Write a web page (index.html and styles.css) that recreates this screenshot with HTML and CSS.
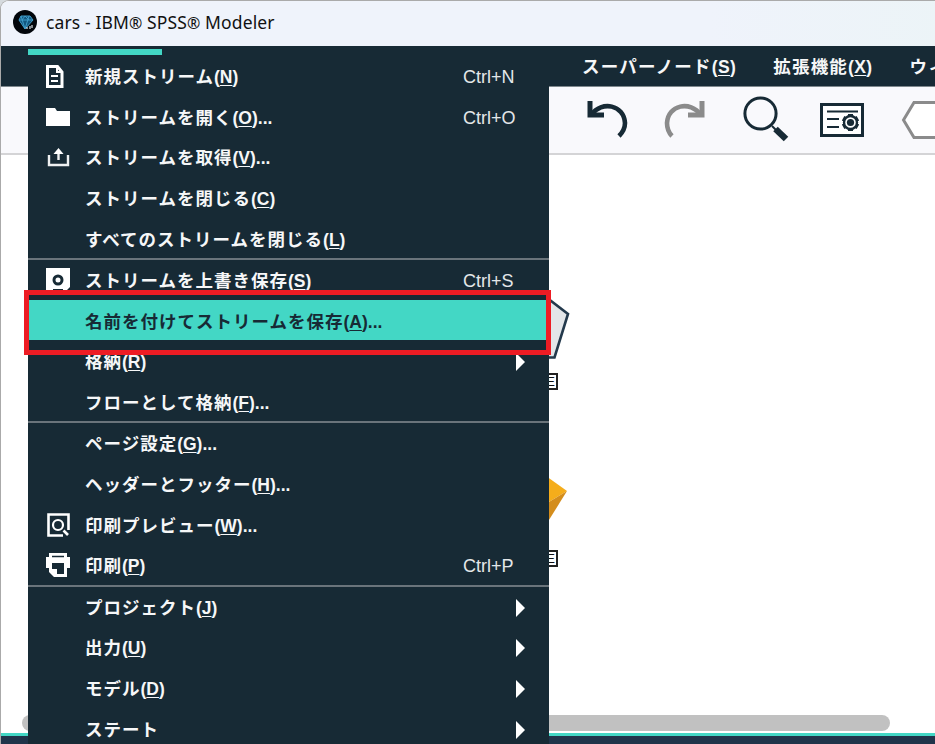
FILE: index.html
```
<!DOCTYPE html>
<html lang="ja">
<head>
    <meta charset="UTF-8">
    <meta name="viewport" content="width=device-width, initial-scale=1.0">
    <title>cars - IBM® SPSS® Modeler</title>
    <link rel="stylesheet" href="styles.css">
</head>
<body>
    <div class="window">
        <header class="titlebar">
            <svg class="app-icon" width="24" height="24" viewBox="0 0 24 24">
                <circle cx="12" cy="12" r="12" fill="#02060b"/>
                <path d="M8 6h9l3 4-8 9-6-9z" fill="#12577f"/>
                <path d="M8 6l-2 4 6 9 8-9-3-4H8l4 13 4-13M6 10h14M9 10l3-4 4 4" fill="none" stroke="#3f9cc9" stroke-width="1"/>
                <path d="M14 19v-2M17 19v-3M19 18v-3" stroke="#dce5ea" stroke-width="1.2"/>
            </svg>
            <span class="title">cars - IBM<span class="reg">®</span> SPSS<span class="reg">®</span> Modeler</span>
        </header>

        <nav class="menubar">
            <span class="menubar-item">スーパーノード<span class="key">(<u>S</u>)</span></span>
            <span class="menubar-item">拡張機能<span class="key">(<u>X</u>)</span></span>
            <span class="menubar-item">ウィ</span>
        </nav>

        <div class="toolbar">
            <svg class="tool undo" width="42" height="40" viewBox="0 0 42 40">
                <path d="M4 15C15 0 37 5 38 23c0 6-3 10-6 13" fill="none" stroke="#172a35" stroke-width="4.6"/>
                <path d="M3 1v14h14" fill="none" stroke="#172a35" stroke-width="5"/>
            </svg>
            <svg class="tool redo" width="42" height="40" viewBox="0 0 42 40">
                <path d="M38 15C27 0 5 5 4 23c0 6 2 10 5 13" fill="none" stroke="#8b8b8b" stroke-width="4.6"/>
                <path d="M39 1v14H25" fill="none" stroke="#8b8b8b" stroke-width="5"/>
            </svg>
            <svg class="tool search" width="46" height="46" viewBox="0 0 46 46">
                <circle cx="17.5" cy="17.5" r="15.6" fill="none" stroke="#172a35" stroke-width="3"/>
                <path d="M29 30l4 4" stroke="#172a35" stroke-width="2"/>
                <path d="M32.5 33L43 43" stroke="#172a35" stroke-width="6.5"/>
            </svg>
            <svg class="tool props" width="44" height="34" viewBox="0 0 44 34">
                <rect x="1.5" y="1.5" width="41" height="31" fill="#fff" stroke="#172a35" stroke-width="3"/>
                <path d="M7 8.500h31M7 16h12M7 24h12" stroke="#172a35" stroke-width="1.8"/>
                <path d="M30.500 11v17M23.100 15.250l14.800 8.500M37.900 15.250l-14.800 8.500" stroke="#172a35" stroke-width="5"/>
                <circle cx="30.5" cy="19.5" r="6.5" fill="#fff" stroke="#172a35" stroke-width="2.4"/>
                <circle cx="30.5" cy="19.5" r="3.6" fill="#172a35"/>
            </svg>
            <svg class="tool node" width="50" height="40" viewBox="0 0 50 40">
                <path d="M2.5 20L13 2.5h24L47 20 37 37.5H13z" fill="#fff" stroke="#8b8b8b" stroke-width="3"/>
            </svg>
        </div>

        <main class="canvas">
            <svg class="stream-node pentagon" width="60" height="64" viewBox="0 0 60 64">
                <path d="M31 -3L57 17 43.500 60.500H17L4 17z" fill="#e3e6e9" stroke="#23394c" stroke-width="2.6"/>
            </svg>
            <svg class="stream-node gem" width="60" height="60" viewBox="0 0 60 60">
                <path d="M30 0L58 20 30 37 2 20z" fill="#f5ad1b"/>
                <path d="M58 20L30 37v28z" fill="#d48d1c"/>
            </svg>
            <span class="node-label first">E</span>
            <span class="node-label second">E</span>
            <div class="scrollbar"></div>
        </main>
        <footer class="statusbar"></footer>
    </div>

    <div class="menu">
        <div class="menu-tab"></div>
        <div class="menu-item">
            <svg class="icon" width="26" height="26" viewBox="0 0 26 26">
                <path d="M2.500 2.500h10L17 8v14.500H2.500z" fill="none" stroke="#fff" stroke-width="3"/>
                <path d="M12 2v6h6M6 12h7M6 17h7" fill="none" stroke="#fff" stroke-width="2"/>
            </svg>
            <span class="label">新規ストリーム<span class="key">(<u>N</u>)</span></span>
            <span class="shortcut">Ctrl+N</span>
        </div>
        <div class="menu-item">
            <svg class="icon" width="26" height="26" viewBox="0 0 26 26"><path d="M1 3h9l2 3h13v15H1z" fill="#fff"/></svg>
            <span class="label">ストリームを開く<span class="key">(<u>O</u>)...</span></span>
            <span class="shortcut">Ctrl+O</span>
        </div>
        <div class="menu-item">
            <svg class="icon" width="26" height="26" viewBox="0 0 26 26">
                <path d="M4 10v10h19V10M13.500 15V6" fill="none" stroke="#eef0f1" stroke-width="2.400"/>
                <path d="M13.500 3l5 6h-10z" fill="#fff"/>
            </svg>
            <span class="label">ストリームを取得<span class="key">(<u>V</u>)...</span></span>
        </div>
        <div class="menu-item">
            <span class="icon"></span>
            <span class="label">ストリームを閉じる<span class="key">(<u>C</u>)</span></span>
        </div>
        <div class="menu-item">
            <span class="icon"></span>
            <span class="label">すべてのストリームを閉じる<span class="key">(<u>L</u>)</span></span>
        </div>
        <div class="separator"></div>
        <div class="menu-item">
            <svg class="icon" width="26" height="26" viewBox="0 0 26 26">
                <path d="M1 0h24v19l-5 5H1z" fill="#fff"/>
                <circle cx="13" cy="12" r="4" fill="none" stroke="#172a35" stroke-width="3"/>
                <path d="M8 22h10" stroke="#172a35" stroke-width="2"/>
            </svg>
            <span class="label">ストリームを上書き保存<span class="key">(<u>S</u>)</span></span>
            <span class="shortcut">Ctrl+S</span>
        </div>
        <div class="menu-item active">
            <span class="icon"></span>
            <span class="label">名前を付けてストリームを保存<span class="key">(<u>A</u>)...</span></span>
        </div>
        <div class="menu-item">
            <span class="icon"></span>
            <span class="label">格納<span class="key">(<u>R</u>)</span></span>
            <span class="arrow"></span>
        </div>
        <div class="menu-item">
            <span class="icon"></span>
            <span class="label">フローとして格納<span class="key">(<u>F</u>)...</span></span>
        </div>
        <div class="separator"></div>
        <div class="menu-item">
            <span class="icon"></span>
            <span class="label">ページ設定<span class="key">(<u>G</u>)...</span></span>
        </div>
        <div class="menu-item">
            <span class="icon"></span>
            <span class="label">ヘッダーとフッター<span class="key">(<u>H</u>)...</span></span>
        </div>
        <div class="menu-item">
            <svg class="icon" width="26" height="26" viewBox="0 0 26 26">
                <path d="M18 22.500H3.500v-21h20V17" fill="none" stroke="#fff" stroke-width="2.600"/>
                <circle cx="13" cy="12" r="5" fill="none" stroke="#fff" stroke-width="2.200"/>
                <path d="M18.500 17.500l4.500 4.500" stroke="#fff" stroke-width="2.600"/>
            </svg>
            <span class="label">印刷プレビュー<span class="key">(<u>W</u>)...</span></span>
        </div>
        <div class="menu-item">
            <svg class="icon" width="26" height="26" viewBox="0 0 26 26">
                <path d="M4 0h18v4h3v11h-3v9H9l-5-5v-4H1V4h3z" fill="#fff"/>
                <path d="M7 3.500h12" stroke="#172a35" stroke-width="1.500"/>
                <path d="M7 10h12v11h-7v-5H7z" fill="#172a35"/>
            </svg>
            <span class="label">印刷<span class="key">(<u>P</u>)</span></span>
            <span class="shortcut">Ctrl+P</span>
        </div>
        <div class="separator"></div>
        <div class="menu-item">
            <span class="icon"></span>
            <span class="label">プロジェクト<span class="key">(<u>J</u>)</span></span>
            <span class="arrow"></span>
        </div>
        <div class="menu-item">
            <span class="icon"></span>
            <span class="label">出力<span class="key">(<u>U</u>)</span></span>
            <span class="arrow"></span>
        </div>
        <div class="menu-item">
            <span class="icon"></span>
            <span class="label">モデル<span class="key">(<u>D</u>)</span></span>
            <span class="arrow"></span>
        </div>
        <div class="menu-item">
            <span class="icon"></span>
            <span class="label">ステート</span>
            <span class="arrow"></span>
        </div>
    </div>

    <div class="callout"></div>
</body>
</html>
```
FILE: styles.css
```
* {
    box-sizing: border-box;
}

body {
    margin: 0;
    width: 935px;
    height: 744px;
    overflow: hidden;
    position: relative;
    background: #d5dade;
    font-family: "Liberation Sans", "Noto Sans CJK JP", sans-serif;
}

.window {
    width: 945px;
    height: 744px;
    display: flex;
    flex-direction: column;
    border-left: 1px solid #aaa;
    border-top: 1px solid #aaa;
    border-top-left-radius: 9px;
    overflow: hidden;
    background: #fff;
}

.titlebar {
    height: 45px;
    flex-shrink: 0;
    display: flex;
    align-items: center;
    gap: 9px;
    padding: 0 0 3px 12px;
    background: linear-gradient(90deg, #eff3fb 75%, #ecf4f7);
}

.title {
    font-family: "Noto Sans", sans-serif;
    font-size: 17.5px;
    letter-spacing: 0.12px;
    color: #111;
    white-space: pre;
}

.reg {
    font-size: 16px;
}

.menubar {
    height: 41px;
    flex-shrink: 0;
    display: flex;
    align-items: center;
    gap: 37px;
    padding: 1px 0 0 581px;
    background: #172a35;
    border-bottom: 1px solid #7f888d;
}

.menubar-item,
.label {
    color: #f6f7f8;
    font-size: 17.5px;
    font-weight: bold;
    line-height: 24px;
    letter-spacing: 1px;
    white-space: nowrap;
}

.menubar-item {
    letter-spacing: 1.2px;
}

.menubar-item .key {
    letter-spacing: 0.4px;
}

.label {
    margin-left: -1px;
}

.key {
    font-size: 17.5px;
    letter-spacing: 0;
}

.key u {
    text-underline-offset: 2px;
    text-decoration-thickness: 1px;
}

.toolbar {
    height: 68px;
    flex-shrink: 0;
    display: flex;
    align-items: center;
    padding-left: 586px;
    background: #f9f9fc;
    border-bottom: 2px solid #d4d4d6;
}

.tool {
    flex-shrink: 0;
}

.redo {
    margin-left: 34px;
}

.search {
    margin-left: 38px;
    margin-top: -2px;
}

.props {
    margin-left: 31px;
}

.node {
    margin-left: 37px;
}

.canvas {
    flex: 1;
    display: flex;
    flex-direction: column;
    justify-content: flex-end;
    position: relative;
}

.stream-node,
.node-label {
    position: absolute;
}

.stream-node {
    overflow: visible;
}

.pentagon {
    left: 510px;
    top: 142px;
}

.gem {
    left: 508px;
    top: 316px;
}

.node-label {
    left: 541px;
    width: 16px;
    height: 17px;
    padding-right: 1px;
    border: 2px solid #222;
    font-size: 13px;
    line-height: 13px;
    text-align: right;
    color: #111;
}

.first {
    top: 218px;
}

.second {
    top: 395px;
}

.scrollbar {
    height: 16px;
    width: 868px;
    margin: 0 0 2px 21px;
    border-radius: 8px;
    background: #c1c1c1;
}

.statusbar {
    height: 11px;
    flex-shrink: 0;
    background: #20344a;
    border-top: 3px solid #43d7c5;
}

.menu {
    position: absolute;
    left: 28px;
    top: 49px;
    width: 521px;
    height: 695px;
    overflow: hidden;
    background: #172a35;
}

.menu-tab {
    width: 134px;
    height: 6px;
    background: #43d7c5;
}

.menu-item {
    height: 40.7px;
    display: flex;
    align-items: center;
    padding: 3px 24px 0 17px;
}

.icon {
    width: 26px;
    height: 26px;
    flex-shrink: 0;
    margin-right: 15px;
}

.shortcut {
    width: 62px;
    margin-left: auto;
    padding-top: 1px;
    color: #e4e7e9;
    font-size: 18px;
}

.arrow {
    margin-left: auto;
    border: 9px solid transparent;
    border-left-color: #fff;
    border-right: 0;
}

.menu-item.active {
    background: #43d7c5;
}

.active .label {
    color: #172a35;
}

.separator {
    height: 2px;
    margin: -0.7px 0;
    position: relative;
    background: #6a747b;
}

/* red frame around the "save as" entry */
.callout {
    position: absolute;
    left: 24px;
    top: 290px;
    width: 527px;
    height: 65px;
    border: 5px solid #ed1c24;
}
```
